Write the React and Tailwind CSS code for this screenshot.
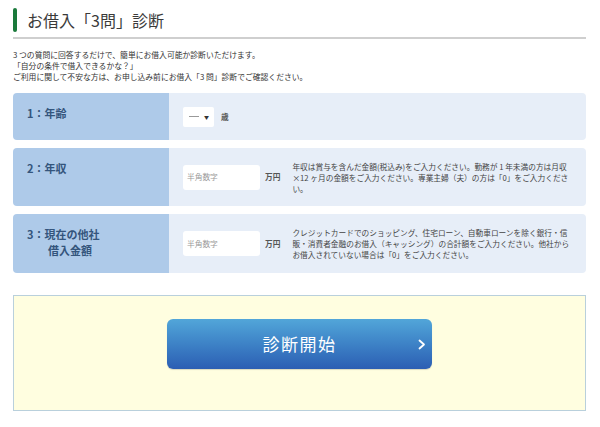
import React from "react";

const font = "[font-family:'Noto_Sans_CJK_JP','Noto_Sans',sans-serif]";

function Row({ label, height, children, desc }) {
  return (
    <div className={`flex rounded-[4px] overflow-hidden ${height}`}>
      <div className="w-[156px] shrink-0 bg-[#aecae9] pl-[14px] pt-[12px] text-[11px] leading-[16px] font-bold text-[#34557c]">
        {label}
      </div>
      <div className="flex-1 bg-[#e7eef8] flex items-center pl-[14px] pr-[10px]">
        {children}
        {desc && (
          <p className="ml-[12px] flex-1 text-[7.7px] leading-[11px] text-[#444]">{desc}</p>
        )}
      </div>
    </div>
  );
}

function TextInput() {
  return (
    <>
      <div className="w-[77px] h-[25px] bg-white rounded-[3px] flex items-center pl-[4px] text-[7.7px] text-[#999] shrink-0">
        半角数字
      </div>
      <span className="ml-[5px] text-[7.7px] font-bold text-[#555] shrink-0">万円</span>
    </>
  );
}

export default function App() {
  return (
    <div className={`w-[600px] h-[427px] bg-white px-[13px] pr-[14px] pt-[8px] ${font}`}>
      <div className="flex items-center">
        <div className="w-[4px] h-[24px] rounded-[2px] bg-[#1b7a3b]" />
        <h1 className="ml-[10px] text-[16px] leading-[24px] text-[#3a3a3a]">お借入「3問」診断</h1>
      </div>
      <div className="mt-[5px] h-[2px] bg-[#cfcfcf]" />
      <div className="mt-[10px] text-[7.8px] leading-[11px] text-[#333]">
        <p>3&nbsp;つの質問に回答するだけで、簡単にお借入可能か診断いただけます。</p>
        <p>「自分の条件で借入できるかな？」</p>
        <p>ご利用に関して不安な方は、お申し込み前にお借入「3&nbsp;問」診断でご確認ください。</p>
      </div>
      <div className="mt-[11px] flex flex-col gap-[8px]">
        <Row label="1：年齢" height="h-[47px]">
          <div className="w-[31px] h-[20px] bg-white rounded-[2px] flex items-center justify-between pl-[6px] pr-[5px] text-[#888]">
            <span className="block w-[10px] h-[1px] bg-[#999]" />
            <span className="text-[5px] leading-none text-[#333]">▼</span>
          </div>
          <span className="ml-[7px] text-[7.7px] font-bold text-[#555]">歳</span>
        </Row>
        <Row
          label="2：年収"
          height="h-[58px]"
          desc="年収は賞与を含んだ金額(税込み)をご入力ください。勤務が 1 年未満の方は月収×12 ヶ月の金額をご入力ください。専業主婦（夫）の方は「0」をご入力ください。"
        >
          <TextInput />
        </Row>
        <Row
          label={<><div>3：現在の他社</div><div className="pl-[21px]">借入金額</div></>}
          height="h-[59px]"
          desc="クレジットカードでのショッピング、住宅ローン、自動車ローンを除く銀行・信販・消費者金融のお借入（キャッシング）の合計額をご入力ください。他社からお借入されていない場合は「0」をご入力ください。"
        >
          <TextInput />
        </Row>
      </div>
      <div className="mt-[22px] h-[116px] border border-[#b9d0dc] bg-[#fffee0] flex justify-center pt-[23px]">
        <button className="relative w-[265px] h-[50px] rounded-[6px] bg-gradient-to-b from-[#52a6d9] to-[#2c5eb3] text-white text-[17px] tracking-[1.5px] shadow-[0_1px_1px_rgba(0,0,0,0.15)]">
          診断開始
          <svg className="absolute right-[6px] top-[20px]" width="8" height="11" viewBox="0 0 8 11" fill="none">
            <path d="M1.5 1.5 L6 5.5 L1.5 9.5" stroke="white" strokeWidth="1.8" strokeLinecap="round" strokeLinejoin="round" />
          </svg>
        </button>
      </div>
    </div>
  );
}
